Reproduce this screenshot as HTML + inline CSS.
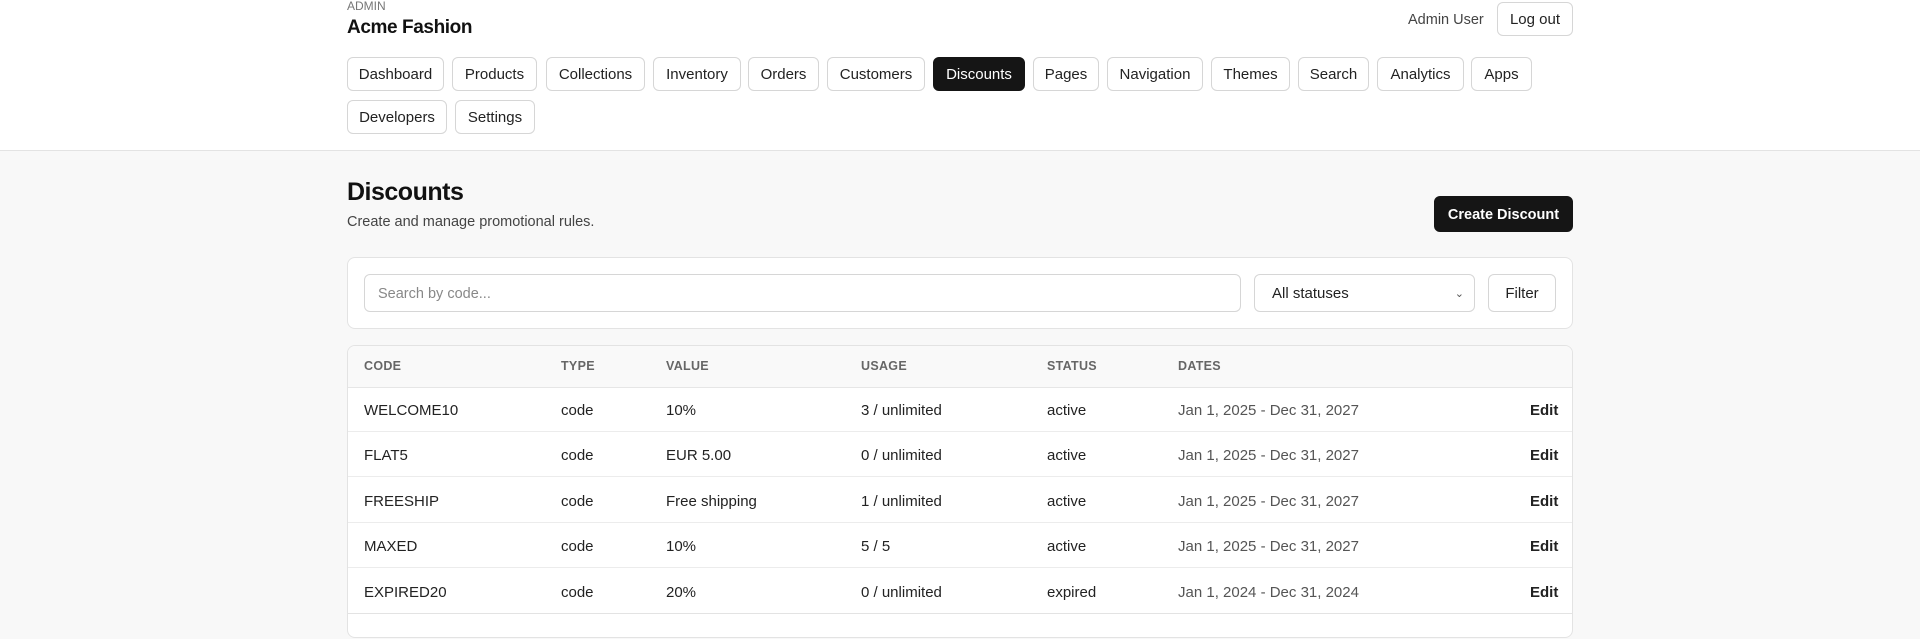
<!DOCTYPE html>
<html><head><meta charset="utf-8"><style>
*{box-sizing:border-box;margin:0;padding:0}
body{width:1920px;height:639px;overflow:hidden;background:#f8f8f8;font-family:"Liberation Sans",sans-serif;color:#111;position:relative}
.hdr{position:absolute;left:0;top:0;width:1920px;height:151px;background:#fff;border-bottom:1px solid #e3e3e3}
.abs{position:absolute}
.btn{position:absolute;height:34px;border:1px solid #d6d6d6;border-radius:6px;background:#fff;font-size:15px;line-height:34px;text-align:center;color:#222}
.dark{background:#151515;color:#fff;border-color:#151515}
.card{position:absolute;background:#fff;border:1px solid #e3e3e3;border-radius:8px}
.th{position:absolute;font-size:12.5px;color:#666;font-weight:bold;letter-spacing:.3px;top:359px}
.cell{position:absolute;font-size:15px;color:#222}
.line{position:absolute;left:348px;width:1224px;height:1px;background:#ececec}
</style></head><body>
<div class="hdr"></div>
<div class="abs" style="left:347px;top:-1px;font-size:12px;color:#777">ADMIN</div>
<div class="abs" style="left:347px;top:17px;font-size:19px;font-weight:bold;letter-spacing:-.4px">Acme Fashion</div>
<div class="abs" style="left:1408px;top:12px;font-size:14.5px;color:#444">Admin User</div>
<div class="btn" style="left:1497px;top:2px;width:76px">Log out</div>

<div class="btn" style="left:347px;top:57px;width:97px">Dashboard</div>
<div class="btn" style="left:452px;top:57px;width:85px">Products</div>
<div class="btn" style="left:546px;top:57px;width:99px">Collections</div>
<div class="btn" style="left:653px;top:57px;width:88px">Inventory</div>
<div class="btn" style="left:748px;top:57px;width:71px">Orders</div>
<div class="btn" style="left:827px;top:57px;width:98px">Customers</div>
<div class="btn dark" style="left:933px;top:57px;width:92px">Discounts</div>
<div class="btn" style="left:1033px;top:57px;width:66px">Pages</div>
<div class="btn" style="left:1107px;top:57px;width:96px">Navigation</div>
<div class="btn" style="left:1211px;top:57px;width:79px">Themes</div>
<div class="btn" style="left:1298px;top:57px;width:71px">Search</div>
<div class="btn" style="left:1377px;top:57px;width:87px">Analytics</div>
<div class="btn" style="left:1471px;top:57px;width:61px">Apps</div>
<div class="btn" style="left:347px;top:100px;width:100px">Developers</div>
<div class="btn" style="left:455px;top:100px;width:80px">Settings</div>

<div class="abs" style="left:347px;top:178px;font-size:25px;font-weight:bold;letter-spacing:-.5px">Discounts</div>
<div class="abs" style="left:347px;top:214px;font-size:14.5px;color:#444">Create and manage promotional rules.</div>
<div class="btn dark" style="left:1434px;top:196px;width:139px;height:36px;line-height:36px;font-weight:bold;font-size:14.5px">Create Discount</div>

<div class="card" style="left:347px;top:257px;width:1226px;height:72px"></div>
<div class="btn" style="left:364px;top:274px;width:877px;height:38px;line-height:38px;text-align:left;padding-left:13px;color:#888;font-size:14.5px">Search by code...</div>
<div class="btn" style="left:1254px;top:274px;width:221px;height:38px;line-height:38px;text-align:left;padding-left:17px;font-size:15px">All statuses<span style="position:absolute;right:10px;top:0;font-size:11px;color:#555">&#8964;</span></div>
<div class="btn" style="left:1488px;top:274px;width:68px;height:38px;line-height:38px">Filter</div>

<div class="card" style="left:347px;top:345px;width:1226px;height:293px;overflow:hidden"><div style="height:42px;background:#f9f9f9;border-bottom:1px solid #e6e6e6"></div></div>
<div class="th" style="left:364px">CODE</div><div class="th" style="left:561px">TYPE</div><div class="th" style="left:666px">VALUE</div><div class="th" style="left:861px">USAGE</div><div class="th" style="left:1047px">STATUS</div><div class="th" style="left:1178px">DATES</div>

<div class="line" style="top:431px"></div><div class="line" style="top:476px"></div><div class="line" style="top:522px"></div><div class="line" style="top:567px"></div><div class="line" style="top:613px;background:#e3e3e3"></div>

<div class="cell" style="left:364px;top:402px">WELCOME10</div><div class="cell" style="left:561px;top:402px">code</div><div class="cell" style="left:666px;top:402px">10%</div><div class="cell" style="left:861px;top:402px">3 / unlimited</div><div class="cell" style="left:1047px;top:402px">active</div><div class="cell" style="left:1178px;top:402px;color:#555">Jan 1, 2025 - Dec 31, 2027</div><div class="cell" style="left:1530px;top:402px;font-weight:bold">Edit</div>
<div class="cell" style="left:364px;top:447px">FLAT5</div><div class="cell" style="left:561px;top:447px">code</div><div class="cell" style="left:666px;top:447px">EUR 5.00</div><div class="cell" style="left:861px;top:447px">0 / unlimited</div><div class="cell" style="left:1047px;top:447px">active</div><div class="cell" style="left:1178px;top:447px;color:#555">Jan 1, 2025 - Dec 31, 2027</div><div class="cell" style="left:1530px;top:447px;font-weight:bold">Edit</div>
<div class="cell" style="left:364px;top:493px">FREESHIP</div><div class="cell" style="left:561px;top:493px">code</div><div class="cell" style="left:666px;top:493px">Free shipping</div><div class="cell" style="left:861px;top:493px">1 / unlimited</div><div class="cell" style="left:1047px;top:493px">active</div><div class="cell" style="left:1178px;top:493px;color:#555">Jan 1, 2025 - Dec 31, 2027</div><div class="cell" style="left:1530px;top:493px;font-weight:bold">Edit</div>
<div class="cell" style="left:364px;top:538px">MAXED</div><div class="cell" style="left:561px;top:538px">code</div><div class="cell" style="left:666px;top:538px">10%</div><div class="cell" style="left:861px;top:538px">5 / 5</div><div class="cell" style="left:1047px;top:538px">active</div><div class="cell" style="left:1178px;top:538px;color:#555">Jan 1, 2025 - Dec 31, 2027</div><div class="cell" style="left:1530px;top:538px;font-weight:bold">Edit</div>
<div class="cell" style="left:364px;top:584px">EXPIRED20</div><div class="cell" style="left:561px;top:584px">code</div><div class="cell" style="left:666px;top:584px">20%</div><div class="cell" style="left:861px;top:584px">0 / unlimited</div><div class="cell" style="left:1047px;top:584px">expired</div><div class="cell" style="left:1178px;top:584px;color:#555">Jan 1, 2024 - Dec 31, 2024</div><div class="cell" style="left:1530px;top:584px;font-weight:bold">Edit</div>
</body></html>
